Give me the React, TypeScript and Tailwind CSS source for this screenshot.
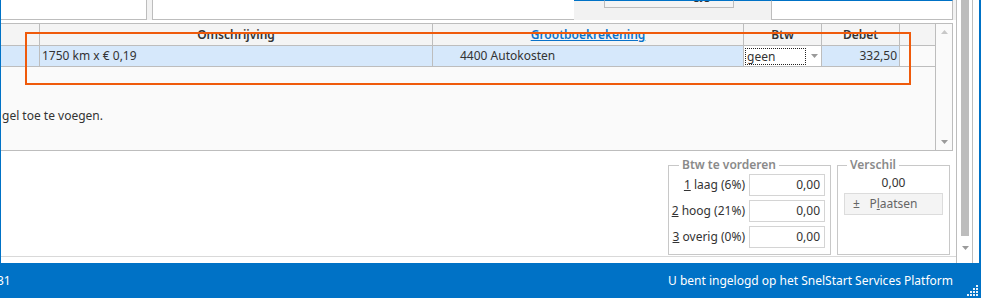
import React from 'react'

const font = 'font-["Segoe_UI","Noto_Sans",sans-serif]'

function Arrow({ up }: { up?: boolean }) {
  return (
    <svg width="7" height="4" viewBox="0 0 7 4" className="block">
      {up ? <path d="M0 4 L3.5 0 L7 4 Z" fill="#c8c8c8" /> : <path d="M0 0 L7 0 L3.5 4 Z" fill="#9a9a9a" />}
    </svg>
  )
}

function AmountRow({ num, label, value }: { num: string; label: string; value: string }) {
  return (
    <div className="flex items-center h-[22px]">
      <div className="flex-1 whitespace-nowrap text-right pr-[4px] text-[12px] text-[#333]">
        <span className="underline">{num}</span> {label}
      </div>
      <div className="w-[76px] shrink-0 h-[22px] border border-[#d4d4d4] bg-white text-right pr-[4px] text-[12px] leading-[20px] text-[#333]">
        {value}
      </div>
    </div>
  )
}

export default function App() {
  return (
    <div className={`relative w-[981px] h-[298px] bg-white overflow-hidden flex flex-col ${font}`}>
      <div className="flex flex-1 border-l border-[#0072c6] border-r-2 border-r-[#0072c6] min-h-0">
        {/* content */}
        <div className="flex flex-col w-[955px] shrink-0">
          {/* top strip */}
          <div className="flex h-[20px] shrink-0 bg-[#f2f2f2]">
            <div className="w-[146px] h-[20px] bg-white border-r border-b border-[#bdbdbd]" />
            <div className="w-[5px]" />
            <div className="w-[422px] h-[20px] bg-white border-l border-b border-[#bdbdbd]" />
            <div className="w-[30px] border-t border-[#0072c6]" />
            <div className="w-[130px] h-[8px] border-x border-b border-t border-t-[#0072c6] border-[#bdbdbd] bg-[#f4f4f4] overflow-hidden relative">
              <span className="absolute left-[10px] -top-[15px] text-[12px] text-[#333]">±</span>
              <span className="absolute left-[88px] -top-[15px] text-[12px] text-[#333]">gjg</span>
            </div>
            <div className="w-[37px] border-t border-[#0072c6]" />
            <div className="w-[182px] h-[20px] bg-white border border-[#bdbdbd] border-t-[#0072c6]" />
          </div>
          <div className="h-[3px] shrink-0" />
          {/* grid */}
          <div className="flex h-[128px] shrink-0 w-[952px] border-r border-b border-[#bdbdbd] bg-[#fafafa]">
            <div className="flex-1 flex flex-col">
              <div className="flex h-[23px] bg-[#f4f4f4] border-y border-[#bdbdbd] text-[12px] font-semibold text-[#333]">
                <div className="w-[39px] border-r border-[#bdbdbd]" />
                <div className="w-[393px] border-r border-[#bdbdbd] flex items-center justify-center">Omschrijving</div>
                <div className="w-[311px] border-r border-[#bdbdbd] flex items-center justify-center">
                  <span className="text-[#0a72c9] underline">Grootboekrekening</span>
                </div>
                <div className="w-[78px] border-r border-[#bdbdbd] flex items-center justify-center">Btw</div>
                <div className="w-[78px] border-r border-[#bdbdbd] flex items-center justify-center">Debet</div>
              </div>
              <div className="flex h-[21px] text-[12px] text-[#333] border-b border-[#bdbdbd]">
                <div className="w-[39px] border-r border-[#bdbdbd] bg-[#d6e8fb]" />
                <div className="w-[393px] border-r border-[#bdbdbd] bg-[#d6e8fb] flex items-center pl-[2px]">1750 km x € 0,19</div>
                <div className="w-[311px] border-r border-[#bdbdbd] bg-[#d6e8fb] flex items-center pl-[27px]">4400 Autokosten</div>
                <div className="w-[78px] border-r border-[#bdbdbd] bg-white flex items-center pl-[1px]">
                  <div className="w-[61px] h-[17px] border border-dotted border-[#222] leading-[15px] pl-[1px]">geen</div>
                  <div className="ml-[5px]"><Arrow /></div>
                </div>
                <div className="w-[78px] border-r border-[#bdbdbd] bg-[#d6e8fb] flex items-center justify-end pr-[2px]">332,50</div>
              </div>
              <div className="pt-[40px] pl-[1px] text-[12px] text-[#333]">gel toe te voegen.</div>
            </div>
            <div className="w-[17px] border-l border-t border-[#bdbdbd] bg-[#fafafa] flex flex-col items-center justify-between py-[6px]">
              <Arrow up />
              <Arrow />
            </div>
          </div>
          {/* lower panel */}
          <div className="flex flex-1 justify-end items-start pr-[6px] pt-[7px] border-b border-[#d9d9d9]">
            <fieldset className="w-[163px] h-[97px] border border-[#c8c8c8] pl-[2px] pr-[5px] pt-0 pb-0 mr-[6px]">
              <legend className="ml-[8px] px-[3px] text-[12px] font-semibold text-[#8a8a8a] leading-[14px]">Btw te vorderen</legend>
              <div className="flex flex-col gap-[4px] pt-[2px]">
                <AmountRow num="1" label="laag (6%)" value="0,00" />
                <AmountRow num="2" label="hoog (21%)" value="0,00" />
                <AmountRow num="3" label="overig (0%)" value="0,00" />
              </div>
            </fieldset>
            <fieldset className="w-[113px] h-[97px] border border-[#c8c8c8] px-[6px]">
              <legend className="ml-[3px] px-[3px] text-[12px] font-semibold text-[#8a8a8a] leading-[14px]">Verschil</legend>
              <div className="text-center text-[12px] text-[#333] leading-[18px] mt-[2px]">0,00</div>
              <div className="relative h-[22px] border border-[#dcdcdc] bg-[#f4f4f4] text-[12px] text-[#666] flex items-center justify-center mt-[1px]">
                <span className="absolute left-[8px]">±</span>
                <span>P<span className="underline">l</span>aatsen</span>
              </div>
            </fieldset>
          </div>
          <div className="h-[6px] shrink-0" />
        </div>
        {/* window scrollbar */}
        <div className="flex-1 flex border-l border-[#bdbdbd]">
          <div className="w-[4px]" />
          <div className="w-[8px] flex flex-col items-center">
            <div className="w-[8px] h-[236px] bg-[#bdbdbd]" />
            <div className="mt-[10px]"><Arrow /></div>
          </div>
          <div className="w-[4px] border-r border-[#bdbdbd]" />
        </div>
      </div>
      {/* status bar */}
      <div className="h-[35px] shrink-0 bg-[#0072c6] text-white text-[12px] flex items-center justify-between relative">
        <span className="-ml-[3px]">31</span>
        <span className="mr-[28px]">U bent ingelogd op het SnelStart Services Platform</span>
        <svg width="12" height="12" viewBox="0 0 12 12" className="absolute right-[2px] bottom-[1px]">
          {[[9, 0], [6, 3], [9, 3], [3, 6], [6, 6], [9, 6], [0, 9], [3, 9], [6, 9], [9, 9]].map(([x, y], i) => (
            <rect key={i} x={x} y={y} width="2" height="2" fill="#e8f1fa" />
          ))}
        </svg>
      </div>
      {/* annotation */}
      <div className="absolute left-[25px] top-[32px] w-[886px] h-[53px] border-2 border-[#ef5a0b] pointer-events-none" />
    </div>
  )
}
